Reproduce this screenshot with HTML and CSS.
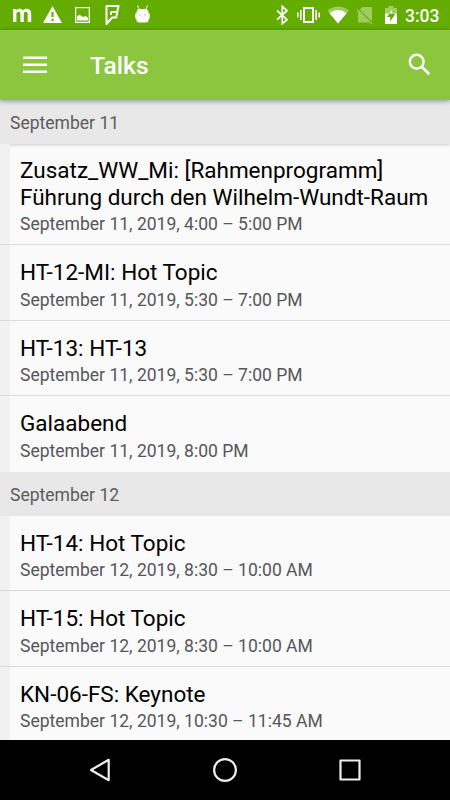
FILE: index.html
```html
<!DOCTYPE html>
<html lang="en">
  <head>
    <meta charset="UTF-8" />
    <meta name="viewport" content="width=device-width, initial-scale=1.0"/>
    <title>Talks</title>
    <link rel="stylesheet" href="styles.css">
  </head>
  <body>
    <div class="status-bar">
      <svg class="status-icons" width="160" height="30" viewBox="0 0 160 30" fill="#fff">
        <path d="M13 22V9h3.300v1.500C17.200 9.300 18.300 8.700 19.700 8.700c1.500 0 2.500.6 3 1.800.9-1.200 2.100-1.800 3.600-1.800 3.300 0 4.900 1.500 4.900 4.700V22h-3.500v-7.800c0-1.700-.5-2.500-1.800-2.500-1.400 0-2.100.9-2.100 2.600V22h-3.400v-7.900c0-1.600-.5-2.400-1.800-2.400-1.400 0-2.200.9-2.200 2.600V22z"/>
        <path fill-rule="evenodd" d="M52.500 6L62 23H43zM51.400 12v5h2.200v-5zM51.400 18.800V21h2.200v-2.200z"/>
        <path fill-rule="evenodd" d="M75 7h15v16H75zM76.300 8.300v13.400h12.400V8.300z"/>
        <path d="M77 20.500v-4l2.500-1.800 3.500 2.300 2.500-1 2.500 1.800v2.700z"/>
        <path fill="none" stroke="#fff" stroke-width="2" stroke-linejoin="round" d="M106.500 6h12l-2.300 11.500h-4l-5.700 6.500z"/>
        <path fill="none" stroke="#fff" stroke-width="1.800" d="M117.500 11.800h-6.500M111 15v-3.500"/>
        <path d="M135 13.500h15v4q0 2-2 2h-11q-2 0-2-2z" opacity=".75"/>
        <path fill-rule="evenodd" d="M136.500 20V12.500q0-3.500 3.500-3.500h5q3.500 0 3.500 3.500V20q0 2.500-3 2.500h-6q-3 0-3-2.500zM139 14v2h2v-2zM144 14v2h2v-2z"/>
        <path stroke="#fff" d="M137.500 5.500l2 4.500M147.500 5.500l-2 4.500"/>
      </svg>
      <svg class="status-icons" width="140" height="30" viewBox="265 0 140 30" fill="#fff">
        <path fill="none" stroke="#fff" stroke-width="1.700" d="M277 10.500l10 9.200-4.700 4V6.500l4.700 4.200-10 9"/>
        <path fill="none" stroke="#fff" stroke-width="2" d="M304 8h9v14h-9z"/>
        <path fill="none" stroke="#fff" stroke-width="1.600" d="M300.800 10v10M297.800 12.500v5M316.200 10v10M319.200 12.500v5"/>
        <path opacity=".38" d="M327.500 10.500Q338 2.500 349 10.500L338 23.500z"/>
        <path d="M329.500 13.200Q338 7 346.500 13.200L338 23.500z"/>
        <path opacity=".38" d="M362.500 7H372v14.500L359.700 9.800zM357.500 9l15 14.500-1 1L369.500 22.500H358V11.500l-1.500-1.500z"/>
        <path opacity=".4" d="M388.500 6h5v2h3.500v5.500h-12V8h3.500z"/>
        <path fill-rule="evenodd" d="M385 13.500h12v10.500h-12zM392 10l-5 7h3.200v4.500l5-7.500h-3.200z"/>
      </svg>
      <span class="clock">3:03</span>
    </div>

    <header class="app-bar">
      <svg width="24" height="18" viewBox="0 0 24 18" fill="#fff">
        <path d="M0 .5h24V3H0zM0 7.500h24V10H0zM0 14.500h24V17H0z"/>
      </svg>
      <h1>Talks</h1>
      <svg class="search" width="24" height="24" viewBox="0 0 24 24" fill="none" stroke="#fff">
        <circle cx="8.700" cy="8.700" r="6.900" stroke-width="2.400"/>
        <path stroke-width="2.700" d="M13.600 13.600l7.700 7.700"/>
      </svg>
    </header>

    <main class="list">
      <h2 class="day first">September 11</h2>
      <div class="talk">
        <p class="title">Zusatz_WW_Mi: [Rahmenprogramm]<br>Führung durch den Wilhelm-Wundt-Raum</p>
        <p class="time">September 11, 2019, 4:00 – 5:00 PM</p>
      </div>
      <div class="talk">
        <p class="title">HT-12-MI: Hot Topic</p>
        <p class="time">September 11, 2019, 5:30 – 7:00 PM</p>
      </div>
      <div class="talk">
        <p class="title">HT-13: HT-13</p>
        <p class="time">September 11, 2019, 5:30 – 7:00 PM</p>
      </div>
      <div class="talk last">
        <p class="title">Galaabend</p>
        <p class="time">September 11, 2019, 8:00 PM</p>
      </div>
      <h2 class="day">September 12</h2>
      <div class="talk">
        <p class="title">HT-14: Hot Topic</p>
        <p class="time">September 12, 2019, 8:30 – 10:00 AM</p>
      </div>
      <div class="talk">
        <p class="title">HT-15: Hot Topic</p>
        <p class="time">September 12, 2019, 8:30 – 10:00 AM</p>
      </div>
      <div class="talk">
        <p class="title">KN-06-FS: Keynote</p>
        <p class="time">September 12, 2019, 10:30 – 11:45 AM</p>
      </div>
    </main>

    <nav class="nav-bar">
      <svg width="24" height="26" viewBox="0 0 24 26"><path d="M3 13L20.700 2.800v20.400z"/></svg>
      <svg width="26" height="26" viewBox="0 0 26 26"><circle cx="13" cy="13" r="10.900"/></svg>
      <svg width="24" height="26" viewBox="0 0 24 26"><path d="M2.500 3.500h19v19h-19z"/></svg>
    </nav>
  </body>
</html>
```
FILE: styles.css
```css
* {
  box-sizing: border-box;
  margin: 0;
  padding: 0;
}

body {
  font-family: Roboto, "Noto Sans", sans-serif;
  background: #fafafa;
  display: flex;
  flex-direction: column;
  height: 100vh;
  overflow: hidden;
}

svg {
  display: block;
  flex: none;
}

.status-bar {
  display: flex;
  justify-content: space-between;
  height: 30px;
  flex: none;
  background: #64ad00;
  color: #fff;
}

.status-icons:first-child {
  margin-right: auto;
}

.clock {
  width: 45px;
  font-size: 17.5px;
  font-weight: 500;
  line-height: 32px;
}

.app-bar {
  display: flex;
  align-items: center;
  height: 70px;
  flex: none;
  padding: 0 18px 0 23px;
  background: #8cc63f;
  color: #fff;
  box-shadow: 0 1px 5px rgba(0, 0, 0, 0.4);
  z-index: 1;
}

.app-bar h1 {
  margin-left: 43px;
  padding-top: 2px;
  font-size: 24.7px;
  font-weight: 500;
  line-height: 30px;
}

.app-bar .search {
  margin-left: auto;
}

.list {
  flex: 1;
  overflow: hidden;
}

.day {
  height: 44px;
  padding-left: 10px;
  background: #e8e8e8;
  color: #5c5c5c;
  font-size: 17.55px;
  font-weight: 400;
  line-height: 46px;
}

.day.first {
  box-shadow: 0 1px 3px rgba(0, 0, 0, 0.2);
}

.talk {
  height: 75.5px;
  padding: 13.9px 0 0 20px;
  background:
    linear-gradient(#dadada, #dadada) bottom / 100% 1px no-repeat,
    linear-gradient(#f1f1f1, #f1f1f1) left / 10px 100% no-repeat;
}

.first + .talk {
  height: 101.3px;
  padding-top: 13.2px;
}

.talk.last {
  background: linear-gradient(#f1f1f1, #f1f1f1) left / 10px 100% no-repeat;
}

.title {
  color: #000;
  font-size: 22.5px;
  line-height: 26.4px;
  white-space: nowrap;
}

.time {
  color: #56565a;
  font-size: 17.55px;
  line-height: 28.4px;
  white-space: nowrap;
}

.nav-bar {
  display: flex;
  justify-content: space-between;
  align-items: center;
  height: 60px;
  flex: none;
  padding: 0 88px;
  background: #000;
}

.nav-bar svg {
  fill: none;
  stroke: #eee;
  stroke-width: 2.2;
  stroke-linejoin: round;
}
```
